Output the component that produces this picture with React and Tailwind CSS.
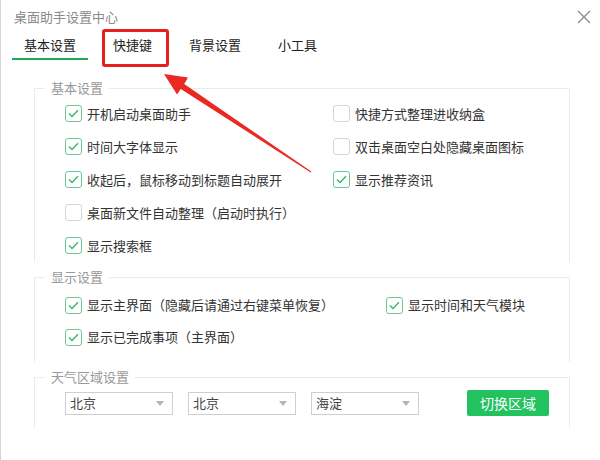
import { useState } from 'react';

const FONT = { fontFamily: '"Microsoft YaHei", "Noto Sans CJK SC", "Noto Sans", sans-serif' };

const CheckBox = ({ checked, label }) => (
  <label className="flex items-center gap-[5px] text-[13px] text-[#333] select-none">
    <span
      className={`w-[17px] h-[17px] rounded-[3px] border-[1.5px] flex items-center justify-center ${
        checked ? 'border-[#6cc795]' : 'border-[#d6d6d6]'
      }`}
    >
      {checked && (
        <svg width="11" height="9" viewBox="0 0 11 9" fill="none">
          <path d="M1 4.5L4 7.5L10 1.2" stroke="#3cb46e" strokeWidth="1.4" />
        </svg>
      )}
    </span>
    {label}
  </label>
);

const Group = ({ title, children, className = '' }) => (
  <fieldset className={`border-t border-x border-b-0 border-[#ebebeb] ${className}`}>
    <legend className="ml-[10px] px-[6px] text-[13px] leading-[18px] text-[#999]">{title}</legend>
    {children}
  </fieldset>
);

const Select = ({ value }) => (
  <div className="w-[108px] h-[23px] border border-[#cfcfcf] flex items-center justify-between pl-[4px] pr-[8px] text-[13px] text-[#444]">
    <span>{value}</span>
    <svg width="8" height="5" viewBox="0 0 8 5">
      <path d="M0 0H8L4 5Z" fill="#b5b5b5" />
    </svg>
  </div>
);

const tabs = ['基本设置', '快捷键', '背景设置', '小工具'];

export default function App() {
  const [active, setActive] = useState(0);

  return (
    <div className="relative w-[600px] h-[460px] bg-white overflow-hidden border-l border-[#d4d4d4]" style={FONT}>
      {/* Title bar */}
      <div className="flex items-center justify-between pl-[13px] pr-[9px] pt-[7px] h-[26px]">
        <span className="text-[13px] text-[#8a8a8a]">桌面助手设置中心</span>
        <svg width="14" height="14" viewBox="0 0 14 14">
          <path d="M1 1L13 13M13 1L1 13" stroke="#8c8c8c" strokeWidth="1.4" />
        </svg>
      </div>

      {/* Tabs */}
      <div className="flex gap-[13px] pl-[11px] mt-[6px]">
        {tabs.map((t, i) => (
          <button
            key={t}
            onClick={() => setActive(i)}
            className={`px-[12px] h-[28px] text-[13px] text-[#222] border-b-2 ${
              active === i ? 'border-[#1fa855]' : 'border-transparent'
            }`}
          >
            {t}
          </button>
        ))}
      </div>

      {/* Settings */}
      <div className="pl-[33px] pr-[30px] mt-[19px] flex flex-col gap-[6px]">
        <Group title="基本设置">
          <div className="grid grid-cols-[268px_1fr] pl-[30px]">
            <div className="flex flex-col">
              <div className="h-[33px] flex items-center"><CheckBox checked label="开机启动桌面助手" /></div>
              <div className="h-[33px] flex items-center"><CheckBox checked label="时间大字体显示" /></div>
              <div className="h-[33px] flex items-center"><CheckBox checked label="收起后，鼠标移动到标题自动展开" /></div>
              <div className="h-[33px] flex items-center"><CheckBox label="桌面新文件自动整理（启动时执行）" /></div>
              <div className="h-[33px] flex items-center"><CheckBox checked label="显示搜索框" /></div>
            </div>
            <div className="flex flex-col">
              <div className="h-[33px] flex items-center"><CheckBox label="快捷方式整理进收纳盒" /></div>
              <div className="h-[33px] flex items-center"><CheckBox label="双击桌面空白处隐藏桌面图标" /></div>
              <div className="h-[33px] flex items-center"><CheckBox checked label="显示推荐资讯" /></div>
            </div>
          </div>
        </Group>

        <Group title="显示设置">
          <div className="grid grid-cols-[321px_1fr] pl-[30px] pt-[3px] pb-[9px]">
            <div className="flex flex-col">
              <div className="h-[32px] flex items-center"><CheckBox checked label="显示主界面（隐藏后请通过右键菜单恢复）" /></div>
              <div className="h-[32px] flex items-center"><CheckBox checked label="显示已完成事项（主界面）" /></div>
            </div>
            <div className="flex flex-col">
              <div className="h-[32px] flex items-center"><CheckBox checked label="显示时间和天气模块" /></div>
            </div>
          </div>
        </Group>

        <Group title="天气区域设置">
          <div className="flex items-center pl-[30px] pt-[4px] pb-[12px]">
            <div className="flex gap-[15px]">
              <Select value="北京" />
              <Select value="北京" />
              <Select value="海淀" />
            </div>
            <button className="ml-[48px] w-[82px] h-[26px] rounded-[2px] bg-[#22c25e] text-white text-[14px]">切换区域</button>
          </div>
        </Group>
      </div>

      {/* Annotation overlay */}
      <div className="absolute left-[101px] top-[29px] w-[67px] h-[38px] border-[3px] border-[#e5201e] rounded-[3px]" />
      <svg className="absolute left-0 top-0 pointer-events-none" width="600" height="460">
        <polygon
          points="163,74 187,77.5 183.2,83.9 310.3,171.6 309.7,172.4 179.8,88.9 176,94.5"
          fill="#ea2a22"
        />
      </svg>
    </div>
  );
}
